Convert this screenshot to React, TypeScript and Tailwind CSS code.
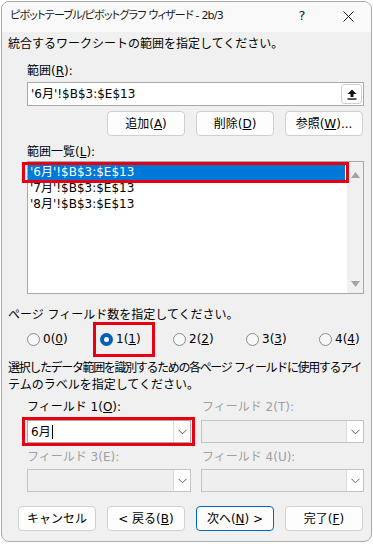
import React from 'react';

const Chevron = () => (
  <svg width="9" height="6" viewBox="0 0 9 6" fill="none">
    <path d="M0.5 0.8 L4.5 4.8 L8.5 0.8" stroke="#606060" strokeWidth="1" />
  </svg>
);

const Combo: React.FC<{ disabled?: boolean; value?: string }> = ({ disabled, value }) => (
  <div
    className={`flex h-[23px] border ${disabled ? 'border-[#c4c4c4] bg-[#efefef]' : 'border-[#a8a8a8] bg-white'}`}
  >
    <div className="flex-1 flex items-center pl-[3px] text-[12px] leading-[16px] text-black">
      {value}
      {value && <span className="inline-block w-[1px] h-[14px] bg-black ml-[1px]" />}
    </div>
    <div className="w-[17px] flex items-center justify-center bg-[#fdfdfd] border-l border-[#dcdcdc]">
      <Chevron />
    </div>
  </div>
);

const Btn: React.FC<{ children: React.ReactNode; primary?: boolean }> = ({ children, primary }) => (
  <div
    className={`w-[78px] h-[25px] flex items-center justify-center rounded-[4px] bg-[#fdfdfd] border text-[12px] text-black ${primary ? 'border-[#0067c0]' : 'border-[#d0d0d0]'}`}
  >
    {children}
  </div>
);

const Radio: React.FC<{ label: string; accel: string; checked?: boolean }> = ({ label, accel, checked }) => (
  <div className="w-[73px] shrink-0 flex items-center gap-[3px]">
    {checked ? (
      <span className="w-[13px] h-[13px] rounded-full bg-[#005fb8] flex items-center justify-center">
        <span className="w-[5px] h-[5px] rounded-full bg-white" />
      </span>
    ) : (
      <span className="w-[13px] h-[13px] rounded-full border border-[#8a8a8a] bg-[#f7f7f7]" />
    )}
    <span className="text-[12px] leading-[16px] text-black">
      {label}(<u>{accel}</u>)
    </span>
  </div>
);

const ranges = ["'6月'!$B$3:$E$13", "'7月'!$B$3:$E$13", "'8月'!$B$3:$E$13"];

const App: React.FC = () => {
  return (
    <div className="w-[373px] h-[544px] bg-white pt-[1px] px-[1px] pb-[2px] font-['DejaVu_Sans','Noto_Sans_CJK_JP',sans-serif]">
      <div className="h-full flex flex-col border border-[#aaaaaa] rounded-[8px] overflow-hidden bg-[#f0f0f0]">
        {/* title bar */}
        <div className="h-[30px] flex items-start bg-[#f9f9f9] shrink-0">
          <div className="flex-1 pl-[8px] pt-[6px] text-[11px] leading-[16px] tracking-[-0.8px] text-[#1a1a1a] whitespace-nowrap [font-feature-settings:'palt']">
            ピボットテーブル/ピボットグラフ ウィザード - 2b/3
          </div>
          <div className="w-[46px] shrink-0 pt-[6px] text-center text-[13px] leading-[16px] text-[#1a1a1a]">?</div>
          <div className="w-[46px] shrink-0 h-[28px] flex items-center justify-center">
            <svg width="11" height="11" viewBox="0 0 11 11">
              <path d="M0.5 0.5 L10.5 10.5 M10.5 0.5 L0.5 10.5" stroke="#1a1a1a" strokeWidth="1" />
            </svg>
          </div>
        </div>

        <div className="flex flex-col pl-[6px] pr-[7px] text-[12px] leading-[16px] text-black">
          <div className="mt-[4px] whitespace-nowrap">統合するワークシートの範囲を指定してください。</div>

          <div className="ml-[19px] mt-[11px]">
            範囲(<u>R</u>):
          </div>
          <div className="ml-[19px] mt-[3px] h-[24px] flex items-center bg-white border border-[#a8a8a8] pl-[3px] pr-[1px]">
            <span className="flex-1">'6月'!$B$3:$E$13</span>
            <div className="w-[21px] h-[20px] flex items-center justify-center bg-white border border-[#d0d0d0] rounded-[3px]">
              <svg width="10" height="11" viewBox="0 0 10 11">
                <path d="M5 0.5 L9.5 5 L6.5 5 L6.5 8 L3.5 8 L3.5 5 L0.5 5 Z" fill="#111" />
                <rect x="0.5" y="9.3" width="9" height="1.4" fill="#111" />
              </svg>
            </div>
          </div>

          <div className="mt-[5px] flex justify-end gap-[11px] mr-[1px]">
            <Btn>
              追加(<u>A</u>)
            </Btn>
            <Btn>
              削除(<u>D</u>)
            </Btn>
            <Btn>
              参照(<u>W</u>)...
            </Btn>
          </div>

          <div className="ml-[19px] mt-[8px]">
            範囲一覧(<u>L</u>):
          </div>
          <div className="relative ml-[19px] mt-[1px] h-[133px] flex bg-white border border-[#a8a8a8]">
            <div className="flex-1 pt-[2px] pr-[2px]">
              {ranges.map((r, i) => (
                <div
                  key={r}
                  className={`h-[16px] pl-[2px] leading-[16px] ${i === 0 ? 'bg-[#0078d7] text-white' : 'text-black'}`}
                >
                  {r}
                </div>
              ))}
            </div>
            <div className="w-[16px] bg-[#f0f0f0] flex flex-col items-center justify-between pt-[10px] pb-[6px]">
              <svg width="9" height="6" viewBox="0 0 9 6">
                <path d="M4.5 0 L9 6 L0 6 Z" fill="#a3a3a3" />
              </svg>
              <svg width="9" height="6" viewBox="0 0 9 6">
                <path d="M0 0 L9 0 L4.5 6 Z" fill="#a3a3a3" />
              </svg>
            </div>
            <div className="absolute left-[-6px] top-[0px] w-[327px] h-[21px] border-[3px] border-[#e60012]" />
          </div>

          <div className="mt-[13px] whitespace-nowrap">ページ フィールド数を指定してください。</div>
          <div className="relative ml-[19px] mt-[8px] h-[16px] flex">
            <Radio label="0" accel="0" />
            <Radio label="1" accel="1" checked />
            <Radio label="2" accel="2" />
            <Radio label="3" accel="3" />
            <Radio label="4" accel="4" />
            <div className="absolute left-[66px] top-[-9px] w-[62px] h-[35px] border-[3px] border-[#e60012]" />
          </div>

          <div className="mt-[13px] leading-[17px] whitespace-nowrap">
            <span className="tracking-[-1.35px]">選択したデータ範囲を識別するための各ページ フィールドに使用するアイ</span>
            <br />
            テムのラベルを指定してください。
          </div>

          <div className="ml-[19px] mt-[5px] grid grid-cols-[164px_163px] gap-x-[10px]">
            <div>
              フィールド 1(<u>O</u>):
            </div>
            <div className="text-[#a0a0a0] pl-[1px]">フィールド 2(T):</div>
            <div className="relative mt-[5px]">
              <Combo value="6月" />
              <div className="absolute left-[-5px] top-[-3px] w-[173px] h-[29px] border-[3px] border-[#e60012]" />
            </div>
            <div className="mt-[5px]">
              <Combo disabled />
            </div>
            <div className="mt-[6px] text-[#a0a0a0]">フィールド 3(E):</div>
            <div className="mt-[6px] text-[#a0a0a0] pl-[1px]">フィールド 4(U):</div>
            <div className="mt-[4px]">
              <Combo disabled />
            </div>
            <div className="mt-[4px]">
              <Combo disabled />
            </div>
          </div>

          <div className="mt-[14px] ml-[10px] flex gap-[11px]">
            <Btn>キャンセル</Btn>
            <Btn>
              &lt; 戻る(<u>B</u>)
            </Btn>
            <Btn primary>
              次へ(<u>N</u>) &gt;
            </Btn>
            <Btn>
              完了(<u>F</u>)
            </Btn>
          </div>
        </div>
      </div>
    </div>
  );
};

export default App;
